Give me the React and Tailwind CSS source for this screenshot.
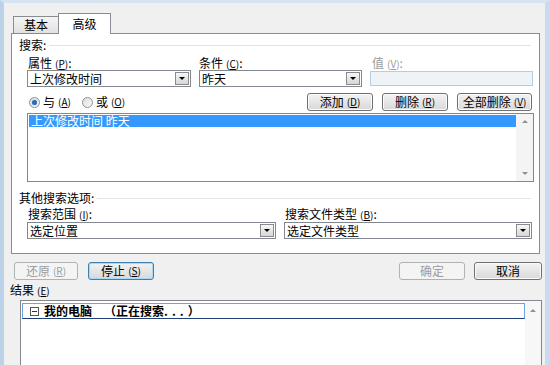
import React from "react";

const FONT = "font-['Noto_Sans_CJK_SC','Noto_Sans',sans-serif]";

function Acc({ k }) {
  return (
    <span className="ml-[3px] text-[10px]">
      (<span className="underline">{k}</span>)
    </span>
  );
}

function Combo({ text, w }) {
  return (
    <div className={`flex h-[17px] items-center border border-[#828790] bg-white ${w}`}>
      <span className="flex-1 truncate pl-[2px] text-[12px] leading-[15px]">{text}</span>
      <div className="mr-[1px] flex h-[13px] w-[14px] items-center justify-center border border-[#8b8b8b] bg-linear-to-b from-[#f7f7f7] to-[#d6d6d6]">
        <div className="h-0 w-0 border-x-[3px] border-t-[3px] border-x-transparent border-t-black" />
      </div>
    </div>
  );
}

function Btn({ children, w, disabled, focus }) {
  const look = disabled
    ? "border-[#adb2b5] bg-[#f4f4f4] text-[#9c9c9c]"
    : focus
    ? "border-[#3c7fb1] bg-linear-to-b from-[#f2f2f2] to-[#d9d9d9] shadow-[inset_0_0_0_1px_#a9d8f5]"
    : "border-[#707070] bg-linear-to-b from-[#f4f4f4] to-[#d8d8d8] shadow-[inset_0_0_0_1px_#fbfbfb]";
  return (
    <div className={`flex h-[18px] items-center justify-center rounded-[3px] border leading-none ${look} ${w}`}>
      {children}
    </div>
  );
}

function Radio({ checked, label, k }) {
  return (
    <div className="flex items-center">
      <div className="flex h-[11px] w-[11px] items-center justify-center rounded-full border border-[#8e8f8f] bg-linear-to-br from-[#dcdcdc] to-[#fbfbfb]">
        {checked && <div className="h-[5px] w-[5px] rounded-full bg-[#2a6bb5] shadow-[0_0_1px_#7fb3e6]" />}
      </div>
      <span className="ml-[3px]">{label}</span>
      <Acc k={k} />
    </div>
  );
}

function UpArrow() {
  return <div className="h-0 w-0 border-x-[3px] border-b-[3px] border-x-transparent border-b-[#909090]" />;
}
function DownArrow() {
  return <div className="h-0 w-0 border-x-[3px] border-t-[3px] border-x-transparent border-t-[#909090]" />;
}

export default function App() {
  return (
    <div
      className={`${FONT} flex h-[365px] w-[550px] overflow-hidden border-l-[4px] border-r-[5px] border-t-[3px] border-l-[#bcd2e8] border-r-[#c9dcef] border-t-[#d6e4f2] bg-[#f0f0f0] text-[12px] leading-[14px] text-black`}
    >
      <div className="flex flex-1 flex-col pl-[7px] pr-[6px] pt-[10px]">
        {/* tabs */}
        <div className="flex h-[20px] items-end pl-[2px]">
          <div className="flex h-[17px] w-[46px] items-center justify-center border border-b-0 border-[#898c95] bg-linear-to-b from-[#f4f4f4] to-[#e1e1e1]">
            基本
          </div>
          <div className="relative z-10 -mb-px -ml-px flex h-[21px] w-[53px] items-center justify-center border border-b-0 border-[#898c95] bg-white">
            高级
          </div>
        </div>

        {/* panel */}
        <div className="flex h-[221px] flex-col border border-[#898c95] bg-white">
          <div className="mt-[4px] flex h-[14px] items-center pl-[7px] pr-[8px]">
            <span>搜索:</span>
            <div className="ml-[3px] h-px flex-1 bg-[#dfe4e8]" />
          </div>
          <div className="pl-[15px] pr-[6px]">
            <div className="mt-[4px] flex h-[14px] gap-[8px]">
              <div className="w-[164px] pl-px">
                属性<Acc k="P" />:
              </div>
              <div className="w-[163px]">
                条件<Acc k="C" />:
              </div>
              <div className="w-[163px] pl-[2px] text-[#9a9a9a]">
                值<Acc k="V" />:
              </div>
            </div>
            <div className="flex gap-[8px]">
              <Combo text="上次修改时间" w="w-[164px]" />
              <Combo text="昨天" w="w-[163px]" />
              <div className="mt-px h-[15px] w-[163px] border border-[#b3cde6] bg-[#eef3f8]" />
            </div>
            <div className="mt-[6px] flex h-[18px] items-center">
              <div className="flex flex-1 items-center gap-[11px] pl-[2px]">
                <Radio checked label="与" k="A" />
                <Radio label="或" k="O" />
              </div>
              <div className="flex gap-[9px] pr-px">
                <Btn w="w-[66px]">
                  添加<Acc k="D" />
                </Btn>
                <Btn w="w-[66px]">
                  删除<Acc k="R" />
                </Btn>
                <Btn w="w-[75px]">
                  全部删除<Acc k="V" />
                </Btn>
              </div>
            </div>
            <div className="-mr-px mt-[2px] flex h-[69px] border border-[#828790] bg-white">
              <div className="flex-1 pl-px pt-px">
                <div className="flex h-[12px] items-center bg-[#3399ff] pl-[2px] leading-none text-white">
                  上次修改时间 昨天
                </div>
              </div>
              <div className="flex w-[17px] flex-col items-center justify-between bg-[#f4f4f4] py-[6px]">
                <UpArrow />
                <DownArrow />
              </div>
            </div>
          </div>

          <div className="mt-[9px] flex h-[14px] items-center pl-[7px] pr-[8px]">
            <span>其他搜索选项:</span>
            <div className="ml-[3px] h-px flex-1 bg-[#dfe4e8]" />
          </div>
          <div className="pl-[15px] pr-[7px]">
            <div className="mt-[2px] flex h-[14px] gap-[8px]">
              <div className="w-[249px] pl-px">
                搜索范围<Acc k="I" />:
              </div>
              <div className="pl-px">
                搜索文件类型<Acc k="B" />:
              </div>
            </div>
            <div className="mt-px flex gap-[8px]">
              <Combo text="选定位置" w="w-[249px]" />
              <Combo text="选定文件类型" w="w-[248px]" />
            </div>
          </div>
        </div>

        {/* bottom buttons */}
        <div className="mt-[8px] flex h-[18px] items-center">
          <Btn disabled w="ml-[3px] w-[64px]">
            还原<Acc k="R" />
          </Btn>
          <Btn focus w="ml-[10px] w-[66px]">
            停止<Acc k="S" />
          </Btn>
          <div className="flex-1" />
          <Btn disabled w="w-[66px]">
            确定
          </Btn>
          <Btn w="-mr-[2px] ml-[9px] w-[68px]">取消</Btn>
        </div>

        <div className="-ml-px mt-[3px] h-[14px]">
          结果<Acc k="E" />
        </div>

        <div className="-mr-[2px] ml-[9px] mt-[3px] flex flex-1 border border-b-0 border-[#828790] bg-white">
          <div className="flex-1 pl-px pt-[2px]">
            <div className="flex h-[16px] items-center border border-[#6fa3dc] border-b-[#1f3f78] bg-white pl-[7px] font-bold leading-none">
              <div className="relative flex h-[9px] w-[9px] items-center justify-center border border-[#555]">
                <div className="h-px w-[5px] bg-[#333]" />
              </div>
              <span className="ml-[5px]">我的电脑</span>
              <span className="ml-[12px]">
                （正在搜索<span className="tracking-[4px]">...</span>）
              </span>
            </div>
          </div>
          <div className="flex w-[16px] flex-col items-center bg-[#f7f7f7] pt-[8px]">
            <UpArrow />
          </div>
        </div>
      </div>
    </div>
  );
}
